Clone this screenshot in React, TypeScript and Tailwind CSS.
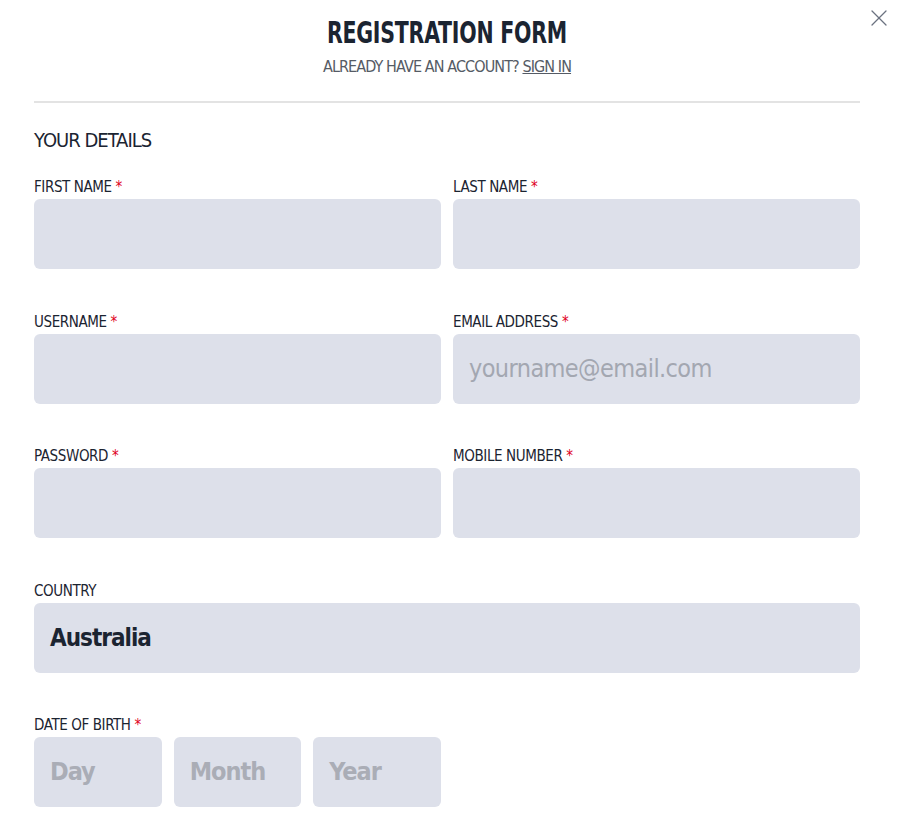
import { X } from 'lucide-react';

const font = { fontFamily: '"DejaVu Sans Condensed", "Liberation Sans Narrow", "Liberation Sans", sans-serif' };

function Label({ text, required }: { text: string; required?: boolean }) {
  return (
    <div className="h-5 mb-[2px] text-[15px] leading-5 text-[#1b2431] tracking-[-0.4px]">
      {text}
      {required && <span className="text-[#e0001b]"> *</span>}
    </div>
  );
}

function Field({ label, required, placeholder, value }: { label: string; required?: boolean; placeholder?: string; value?: string }) {
  return (
    <div>
      <Label text={label} required={required} />
      <div className="h-[70px] rounded-md bg-[#dde0ea] flex items-center px-4">
        {value ? (
          <span className="text-[24px] font-semibold text-[#1b2431] tracking-[-1px]">{value}</span>
        ) : placeholder ? (
          <span className="text-[25px] text-[#a3a7b1] tracking-[-0.6px]">{placeholder}</span>
        ) : null}
      </div>
    </div>
  );
}

export default function App() {
  return (
    <div className="min-h-screen bg-white relative" style={font}>
      <button className="absolute right-[11px] top-[4px] text-[#6b7280]">
        <X size={28} strokeWidth={1.1} />
      </button>
      <div className="px-[34px] pt-[15px] w-[894px]">
        {/* Header */}
        <div className="text-center">
          <h1 className="text-[30px] leading-9 font-bold text-[#1b2431] tracking-[-0.3px]">
            <span className="inline-block scale-x-[0.76]">REGISTRATION FORM</span>
          </h1>
          <p className="mt-1 text-[16px] text-[#555b65] tracking-[-0.9px]">
            ALREADY HAVE AN ACCOUNT? <span className="underline">SIGN IN</span>
          </p>
        </div>
        <div className="mt-[22px] h-[2px] bg-[#e3e3e3]" />

        <h2 className="mt-[25px] text-[20px] leading-6 text-[#1b2431] tracking-[-1px]">YOUR DETAILS</h2>

        <div className="mt-[25px] grid grid-cols-2 gap-x-3 gap-y-[42.5px]">
          <Field label="FIRST NAME" required />
          <Field label="LAST NAME" required />
          <Field label="USERNAME" required />
          <Field label="EMAIL ADDRESS" required placeholder="yourname@email.com" />
          <Field label="PASSWORD" required />
          <Field label="MOBILE NUMBER" required />
          <div className="col-span-2">
            <Field label="COUNTRY" value="Australia" />
          </div>
          <div>
            <Label text="DATE OF BIRTH" required />
            <div className="grid grid-cols-3 gap-3">
              {['Day', 'Month', 'Year'].map((p) => (
                <div key={p} className="h-[70px] rounded-md bg-[#dde0ea] flex items-center px-4">
                  <span className="text-[25px] font-semibold text-[#aaadb6] tracking-[-1px]">{p}</span>
                </div>
              ))}
            </div>
          </div>
        </div>
      </div>
    </div>
  );
}
